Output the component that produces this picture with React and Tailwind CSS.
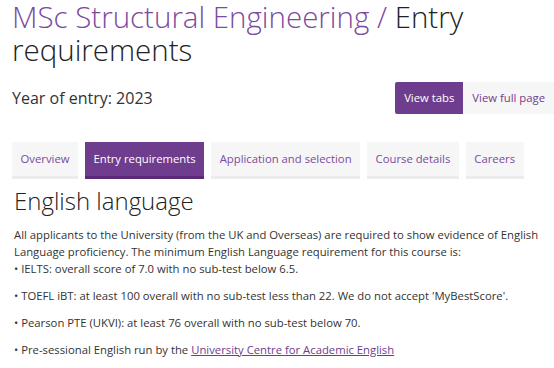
import React from 'react';

const tabs = [
  { label: 'Overview', active: false },
  { label: 'Entry requirements', active: true },
  { label: 'Application and selection', active: false },
  { label: 'Course details', active: false },
  { label: 'Careers', active: false },
];

const App = () => {
  return (
    <div className="min-h-screen bg-white pl-3 text-[#333]" style={{ fontFamily: '"Open Sans", "Liberation Sans", sans-serif' }}>
      <h1 className="text-[29.5px] leading-[33px] font-light pr-3">
        <span className="text-[#7b4a9e]">MSc Structural Engineering / </span>
        <span className="text-[#222]">Entry requirements</span>
      </h1>

      <div className="flex items-center justify-between mt-4">
        <p className="text-[16px] text-[#333]">Year of entry: 2023</p>
        <div className="flex text-[11.3px] h-8">
          <button className="bg-[#6f3d8d] text-white px-[9px] rounded-l-[2px]">View tabs</button>
          <button className="bg-[#f6f6f6] text-[#6f3d8d] px-[9px]">View full page</button>
        </div>
      </div>

      {/* Tabs */}
      <div className="flex gap-[7px] mt-7">
        {tabs.map((tab) => (
          <div
            key={tab.label}
            className={
              tab.active
                ? 'h-[37px] flex items-center whitespace-nowrap px-[8.5px] text-[11.3px] bg-[#6f3d8d] text-white border-b-[3px] border-[#5c2a7a]'
                : 'h-[37px] flex items-center whitespace-nowrap px-[8.5px] text-[11.3px] bg-[#f6f6f6] text-[#7b4a9e] border-b-[3px] border-[#ececec]'
            }
          >
            {tab.label}
          </div>
        ))}
      </div>

      <h2 className="text-[24px] leading-8 font-light text-[#222] mt-[6px] pl-[2px]">English language</h2>

      <div className="text-[11.3px] leading-[17px] text-[#333] mt-[9px] pl-[2px] pr-3">
        <p>
          All applicants to the University (from the UK and Overseas) are required to show evidence of English Language proficiency. The minimum English Language requirement for this course is:
          <br />• IELTS: overall score of 7.0 with no sub-test below 6.5.
        </p>
        <p className="mt-[10px]">• TOEFL iBT: at least 100 overall with no sub-test less than 22. We do not accept 'MyBestScore'.</p>
        <p className="mt-[10px]">• Pearson PTE (UKVI): at least 76 overall with no sub-test below 70.</p>
        <p className="mt-[10px]">
          • Pre-sessional English run by the{' '}
          <a href="#" className="text-[#6f3d8d] underline">University Centre for Academic English</a>
        </p>
      </div>
    </div>
  );
};

export default App;
